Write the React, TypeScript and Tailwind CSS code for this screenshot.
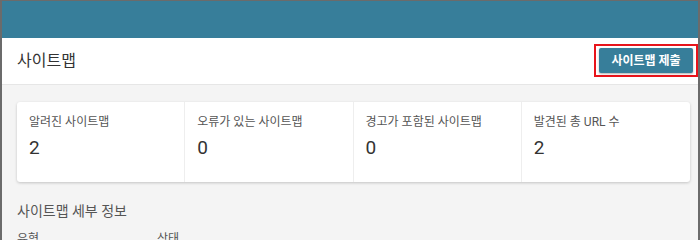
const stats = [
  { label: '알려진 사이트맵', value: '2' },
  { label: '오류가 있는 사이트맵', value: '0' },
  { label: '경고가 포함된 사이트맵', value: '0' },
  { label: '발견된 총 URL 수', value: '2' },
];

export default function App() {
  return (
    <div
      className="w-[700px] h-[240px] overflow-hidden flex flex-col border-x-2 border-t border-[#6b6b6b] bg-[#f4f4f4]"
      style={{ fontFamily: "Roboto, 'Noto Sans CJK KR', sans-serif" }}
    >
      <div className="h-[37px] shrink-0 bg-[#377e9a]" />

      <div className="h-[47px] shrink-0 flex items-center justify-between bg-white border-b border-[#e6e6e6] pl-[15px]">
        <h1 className="text-[16px] text-[#333]">사이트맵</h1>
        <div className="border-2 border-[#e8141b] px-[3px] py-[2px] mt-[-1px]">
          <button className="block h-[25px] w-[94px] bg-[#377e9a] text-white text-[12px] font-semibold rounded-[2px] shadow-[0_1px_2px_rgba(0,0,0,0.3)]">
            사이트맵 제출
          </button>
        </div>
      </div>

      <div className="flex-1 pl-[15px] pr-[8px] pt-[17px]">
        <div className="grid grid-cols-4 h-[80px] bg-white rounded-[3px] shadow-[0_1px_3px_rgba(0,0,0,0.2)]">
          {stats.map((s, i) => (
            <div
              key={s.label}
              className={`pl-[12px] pt-[12px] ${i < 3 ? 'border-r border-[#eeeeee]' : ''}`}
            >
              <div className="text-[12px] text-[#555] leading-[16px]">{s.label}</div>
              <div className="text-[19px] text-[#333] leading-[24px] mt-[6px]">{s.value}</div>
            </div>
          ))}
        </div>

        <h2 className="text-[14px] text-[#555] mt-[19px] leading-[20px]">사이트맵 세부 정보</h2>
        <div className="flex text-[12px] text-[#555] mt-[10px] leading-[16px]">
          <span className="w-[140px]">유형</span>
          <span>상태</span>
        </div>
      </div>
    </div>
  );
}
